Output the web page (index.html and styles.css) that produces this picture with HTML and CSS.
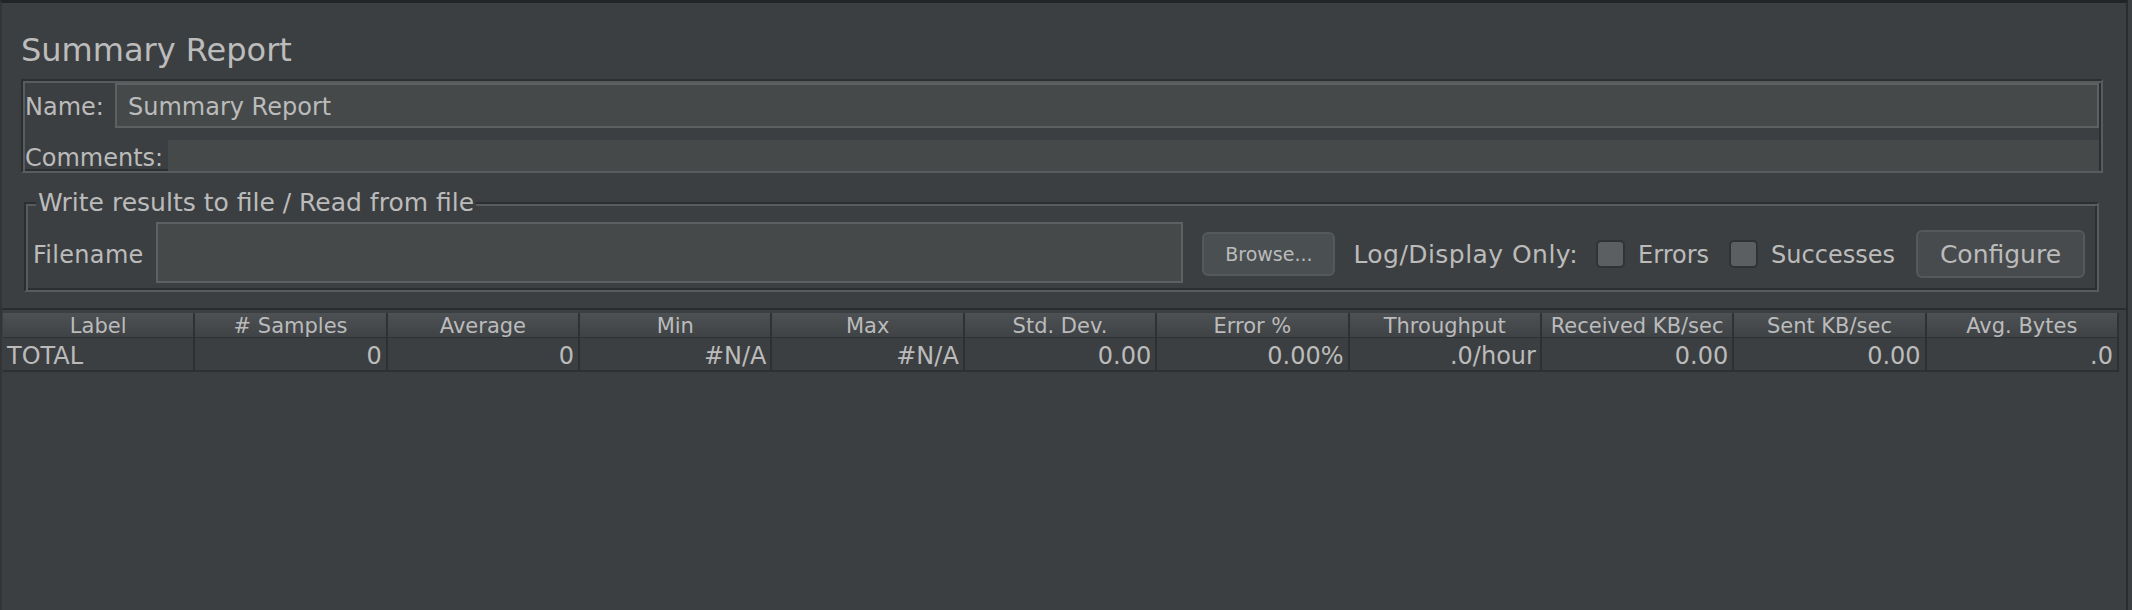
FILE: index.html
```html
<!DOCTYPE html>
<html>
<head>
<meta charset="utf-8">
<title>Summary Report</title>
<link rel="stylesheet" href="styles.css">
</head>
<body>
<div class="window">
  <div class="title">Summary Report</div>

  <div class="name-panel">
    <div class="name-row">
      <span class="lbl name-lbl">Name:</span>
      <div class="text-input">Summary Report</div>
    </div>
    <div class="comments-row">
      <span class="lbl comments-lbl">Comments:</span>
      <div class="textarea"></div>
    </div>
  </div>

  <fieldset class="file-group">
    <legend>Write results to file / Read from file</legend>
    <div class="file-row">
      <span class="lbl file-lbl">Filename</span>
      <div class="file-input"></div>
      <button class="btn browse">Browse...</button>
      <span class="lbl log-lbl">Log/Display Only:</span>
      <span class="checkbox first"></span>
      <span class="lbl chk-lbl">Errors</span>
      <span class="checkbox"></span>
      <span class="lbl chk-lbl">Successes</span>
      <button class="btn configure">Configure</button>
    </div>
  </fieldset>

  <div class="table-pane">
    <div class="grid header">
      <div class="hcell">Label</div>
      <div class="hcell"># Samples</div>
      <div class="hcell">Average</div>
      <div class="hcell">Min</div>
      <div class="hcell">Max</div>
      <div class="hcell">Std. Dev.</div>
      <div class="hcell">Error %</div>
      <div class="hcell">Throughput</div>
      <div class="hcell">Received KB/sec</div>
      <div class="hcell">Sent KB/sec</div>
      <div class="hcell">Avg. Bytes</div>
    </div>
    <div class="grid data-row">
      <div class="dcell left">TOTAL</div>
      <div class="dcell">0</div>
      <div class="dcell">0</div>
      <div class="dcell">#N/A</div>
      <div class="dcell">#N/A</div>
      <div class="dcell">0.00</div>
      <div class="dcell">0.00%</div>
      <div class="dcell">.0/hour</div>
      <div class="dcell">0.00</div>
      <div class="dcell">0.00</div>
      <div class="dcell">.0</div>
    </div>
  </div>
</div>
</body>
</html>
```

FILE: styles.css
```css
html, body {
  margin: 0;
  padding: 0;
  height: 610px;
  overflow: hidden;
  background: #3c3f41;
}

body {
  font-family: "DejaVu Sans", "Liberation Sans", sans-serif;
  color: #bbbbbb;
}

.window {
  box-sizing: border-box;
  height: 610px;
  margin-right: 4px;
  border-top: 3px solid #222425;
  border-left: 2px solid #323436;
  border-right: 2px solid #2a2b2c;
  display: flex;
  flex-direction: column;
}

.title {
  font-size: 32px;
  line-height: 38px;
  margin: 28px 0 10px 19px;
  color: #bcbcbc;
}

/* etched panel */
.name-panel {
  margin: 0 23px 0 19px;
  border-style: solid;
  border-width: 2px;
  border-color: #2c2e2f #595c5e #595c5e #2c2e2f;
  box-shadow: inset 2px 2px 0 #595c5e, inset -2px -2px 0 #2c2e2f;
  padding: 2px 2px 0 2px;
  display: flex;
  flex-direction: column;
}

.lbl {
  font-size: 24px;
  white-space: nowrap;
}

.name-row {
  display: flex;
  align-items: center;
  height: 45px;
}

.name-lbl {
  width: 90px;
  flex: none;
  box-sizing: border-box;
  padding-top: 3px;
}

.text-input {
  flex: 1;
  box-sizing: border-box;
  height: 45px;
  background: #45494a;
  border: 2px solid #5e6162;
  font-size: 24px;
  line-height: 38px;
  padding: 3px 11px 0 11px;
  color: #bbbbbb;
}

.comments-row {
  display: flex;
  align-items: stretch;
  height: 31px;
  margin-top: 12px;
}

.comments-lbl {
  width: 143px;
  flex: none;
  line-height: 36px;
}

.textarea {
  flex: 1;
  background: #45494a;
}

/* file group */
.file-group {
  margin: 16px 27px 0 22px;
  padding: 0 12px 0 7px;
  min-inline-size: 0;
  border-style: solid;
  border-width: 2px;
  border-color: #2c2e2f #595c5e #595c5e #2c2e2f;
  box-shadow: inset 2px 2px 0 #595c5e, inset -2px -2px 0 #2c2e2f;
}

.file-group legend {
  font-size: 25px;
  line-height: 28px;
  padding: 0 2px;
  margin-left: 3px;
  background: #3c3f41;
  color: #bbbbbb;
}

.file-row {
  display: flex;
  align-items: center;
  padding: 5px 0 7px 0;
}

.file-lbl {
  width: 123px;
  flex: none;
  padding-top: 4px;
  letter-spacing: 0.3px;
}

.file-input {
  flex: 1;
  height: 61px;
  box-sizing: border-box;
  background: #45494a;
  border: 2px solid #5e6162;
}

.btn {
  font-family: "DejaVu Sans", "Liberation Sans", sans-serif;
  color: #bbbbbb;
  box-sizing: border-box;
  border: 2px solid #55595b;
  border-radius: 6px;
  padding: 0;
  flex: none;
  margin-top: 3px;
}

.browse {
  margin-left: 19px;
  width: 133px;
  height: 44px;
  font-size: 19px;
  background: #4a4f51;
}

.configure {
  margin-left: 21px;
  width: 169px;
  height: 48px;
  font-size: 25px;
  background: #474b4d;
}

.log-lbl {
  margin-left: 18px;
  font-size: 25px;
  letter-spacing: 0.45px;
  padding-top: 4px;
}

.checkbox {
  flex: none;
  width: 29px;
  height: 28px;
  box-sizing: border-box;
  background: #5c5f61;
  border: 2px solid #303234;
  border-radius: 5px;
  margin-left: 20px;
  margin-top: 2px;
}

.checkbox.first {
  margin-left: 18px;
}

.chk-lbl {
  margin-left: 13px;
  padding-top: 4px;
}

/* table */
.table-pane {
  flex: 1;
  margin-top: 16px;
  border-top: 2px solid #2a2c2d;
  padding: 3px 7px 0 1px;
}

.grid {
  display: grid;
  grid-template-columns: repeat(11, 1fr);
}

.header {
  height: 25px;
  background: linear-gradient(#4d5154, #3f4346);
  border-bottom: 1px solid #2e3133;
  box-sizing: border-box;
}

.hcell {
  font-size: 21px;
  line-height: 23px;
  padding-top: 2px;
  text-align: center;
  border-right: 2px solid #2f3234;
  white-space: nowrap;
  overflow: hidden;
}

.data-row {
  height: 34px;
  box-sizing: border-box;
  border-bottom: 2px solid #2d3032;
}

.dcell {
  font-size: 24px;
  line-height: 28px;
  padding: 4px 4px 0 4px;
  text-align: right;
  border-right: 2px solid #2d3032;
  white-space: nowrap;
  overflow: hidden;
}

.dcell.left {
  text-align: left;
}
```
